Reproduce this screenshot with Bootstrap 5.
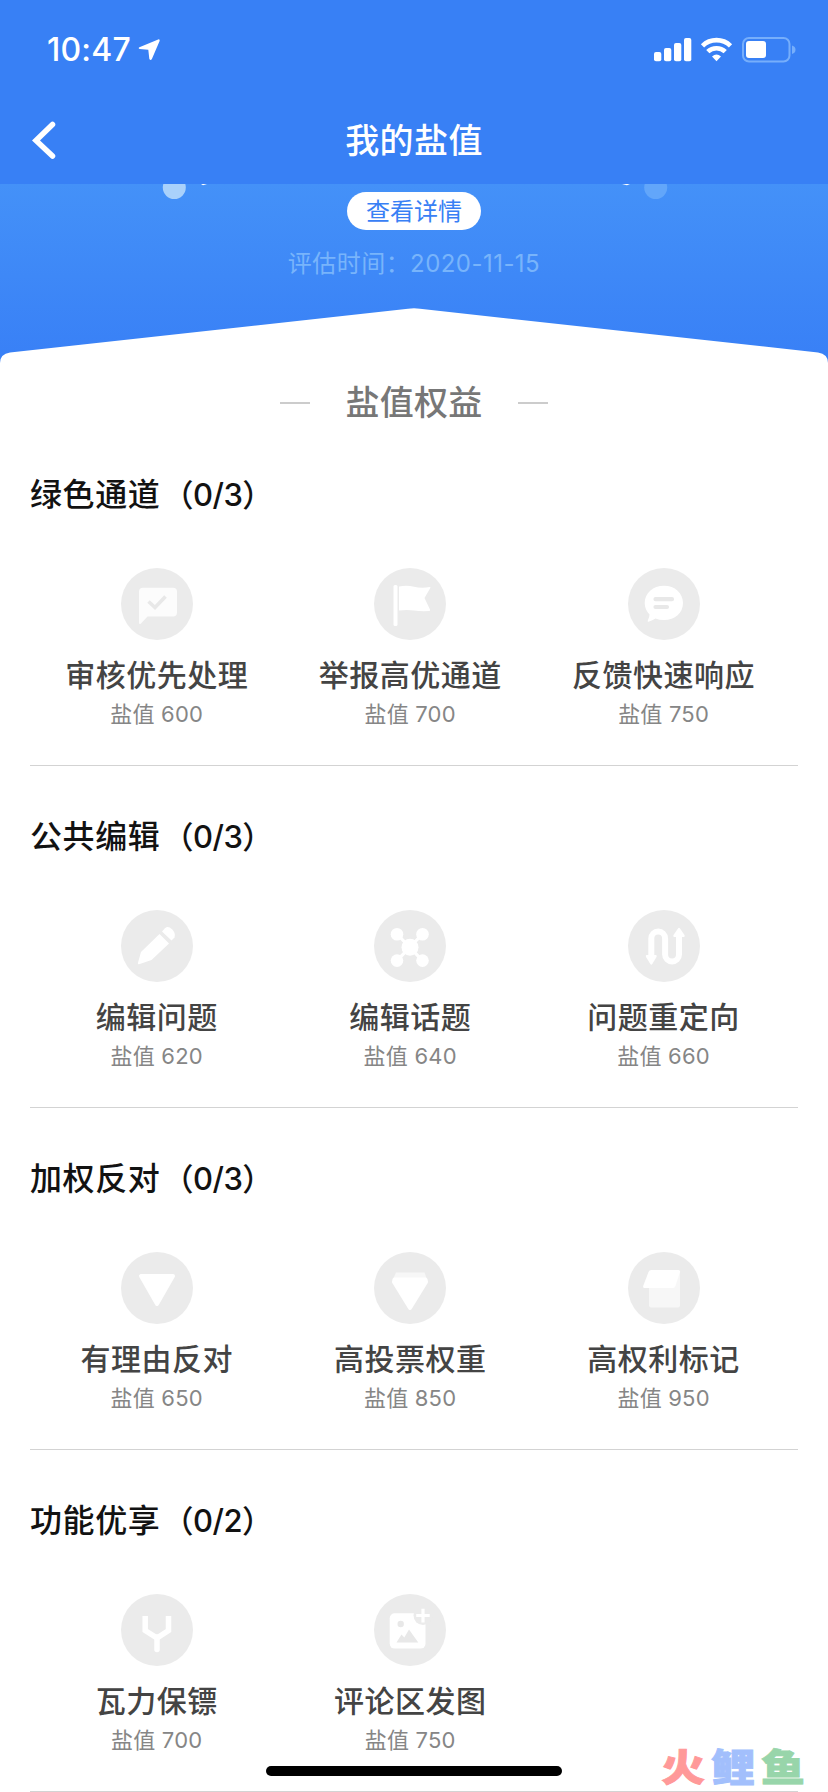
<!DOCTYPE html>
<html lang="zh-CN">
<head>
<meta charset="utf-8">
<meta name="viewport" content="width=device-width, initial-scale=1">
<title>我的盐值</title>
<link href="https://cdn.jsdelivr.net/npm/bootstrap@5.3.0/dist/css/bootstrap.min.css" rel="stylesheet">
<style>
  body { font-family: Inter, "Noto Sans CJK SC", sans-serif; background: #fff; }
  .screen { width: 828px; height: 1792px; }
  .topbar { height: 184px; background: #3880f5; }
  .statusbar { height: 100px; padding: 0 31px 0 47px; }
  .clock { font-size: 32px; font-weight: 500; line-height: 30px; letter-spacing: .2px; }
  .status-left { gap: 7px; }
  .titlebar { height: 84px; padding: 0 30px 2px; }
  .page-title { font-size: 34px; font-weight: 500; line-height: 40px; letter-spacing: .4px; }
  .hero { height: 184px; background: linear-gradient(#4491f8, #387ff6); }
  .hero-art { left: 0; top: 0; }
  .detail-btn { height: 38px; width: 134px; margin-top: 8px; font-size: 24px; line-height: 39px; color: #3880f5; }
  .date-line { font-size: 24px; line-height: 36px; margin-top: 16px; color: #78b4fb; letter-spacing: .45px; }
  .roof { left: 0; bottom: 0; }
  .rights-head { height: 56px; padding-top: 13px; gap: 35px; font-size: 34px; line-height: 42px; color: #777; font-weight: 500; letter-spacing: .3px; }
  .rights-head i { width: 30px; height: 2px; background: #ccc; }
  .group-block { height: 342px; margin: 0 30px; padding-top: 47px; border-bottom: 1px solid #d3d3d3; }
  .group-title { font-size: 32px; line-height: 48px; font-weight: 500; letter-spacing: .6px; color: #121212; }
  .group-title span { font-size: 31px; letter-spacing: -.5px; margin-left: 2px; }
  .entry { width: 33%; margin-top: 49px; }
  .entry svg { width: 72px; height: 72px; }
  .entry-name { font-size: 30px; line-height: 44px; margin-top: 13px; font-weight: 500; letter-spacing: .5px; color: #444; white-space: nowrap; }
  .entry-need { font-size: 22px; line-height: 34px; letter-spacing: .2px; color: #868686; }
  .home-bar { left: 266px; bottom: 16px; width: 296px; height: 10px; background: #000; }
  .brand { right: 23px; bottom: 5px; gap: 6px; font: 900 44px/44px "Noto Sans CJK SC", sans-serif; transform: scaleY(.86); }
  .brand span { -webkit-text-stroke: 1px currentColor; }
</style>
</head>
<body>
<div class="screen position-relative overflow-hidden">
  <header class="topbar text-white">
    <div class="statusbar d-flex align-items-center justify-content-between">
      <div class="status-left d-flex align-items-center">
        <span class="clock">10:47</span>
        <svg width="22" height="22" viewBox="0 0 22 22"><path d="M20.200.4 1.400 8.200Q-.2 9.200 1.600 9.900L10.300 10.800 11.300 19.800Q12.500 22.200 14 19.800L21.600 2Q22 .1 20.200.4Z" fill="#fff"/></svg>
      </div>
      <svg width="144" height="28" viewBox="0 0 144 28">
        <g fill="#fff"><rect x="1" y="16" width="7.300" height="9.300" rx="2"/><rect x="11" y="12" width="7.300" height="13.300" rx="2"/><rect x="21" y="7" width="7.300" height="18.300" rx="2"/><rect x="31" y="2" width="7.300" height="23.300" rx="2"/></g>
        <g fill="none" stroke="#fff" stroke-width="4.600"><path d="M49.500 9.800A20 20 0 0 1 77.500 9.800"/><path d="M54.800 15.700A12.500 12.500 0 0 1 72.200 15.700"/></g>
        <path d="M59 20.500Q63.500 16.700 68 20.500L63.500 25.300Z" fill="#fff"/>
        <rect x="90" y="2" width="46.500" height="23.500" rx="6" fill="none" stroke="#76aefb" stroke-width="2"/>
        <rect x="93" y="5" width="20" height="17" rx="3" fill="#fff"/><path d="M139 9.500Q142.500 10.500 142.500 13.700T139 18Z" fill="#76aefb"/>
      </svg>
    </div>
    <div class="titlebar d-flex align-items-center">
      <svg width="30" height="40" viewBox="0 0 30 40"><path d="M22.500 3.500 6 19.500 22.500 35" fill="none" stroke="#fff" stroke-width="5.500" stroke-linecap="round"/></svg>
      <div class="page-title flex-fill text-center">我的盐值</div>
      <div style="width:30px"></div>
    </div>
  </header>

  <div class="hero position-relative d-flex flex-column align-items-center">
    <svg class="hero-art position-absolute" width="828" height="20" viewBox="0 0 828 20"><circle cx="174.300" cy="3.500" r="11.500" fill="#a9d1fb"/><circle cx="655.700" cy="3.500" r="11.500" fill="#62a6fa"/><path d="M201 0h6l-4 1.200zM622 0h8l-3 1.200z" fill="#fff"/></svg>
    <div class="detail-btn bg-white rounded-pill text-center position-relative">查看详情</div>
    <div class="date-line">评估时间：2020-11-15</div>
    <svg class="roof position-absolute" width="828" height="60" viewBox="0 0 828 60"><path d="M0 60V55Q0 46 10 44.500L408 .8Q414-.3 420 .8L818 44.500Q828 46 828 55V60Z" fill="#fff"/></svg>
  </div>

  <main>
    <div class="rights-head d-flex align-items-center justify-content-center"><i></i><span>盐值权益</span><i></i></div>

    <section class="group-block">
      <div class="group-title">绿色通道<span>（0/3）</span></div>
      <div class="d-flex text-center">
        <div class="entry">
          <svg viewBox="0 0 72 72"><circle cx="36" cy="36" r="36" fill="#ebebeb"/><path d="M22 19.700H52Q56 19.700 56 23.700V44.500Q56 48.500 52 48.500H26.500L20 55.500Q18 57 18 54.500V23.700Q18 19.700 22 19.700Z" fill="#fcfcfc"/><path d="M27.500 33.500 34 39.500 44.500 28.500" fill="none" stroke="#e8e8e8" stroke-width="3.600"/></svg>
          <div class="entry-name">审核优先处理</div><div class="entry-need">盐值 600</div>
        </div>
        <div class="entry">
          <svg viewBox="0 0 72 72"><circle cx="36" cy="36" r="36" fill="#ebebeb"/><rect x="19.500" y="17" width="4" height="41" rx="1.500" fill="#fff"/><path d="M25 18.500Q33 17 40 18.700T56 19Q57 19 56 20.500L50.500 30 56 41.500Q56.500 43 55 43 47 43.500 40 42.500T25 42.500Z" fill="#fff"/></svg>
          <div class="entry-name">举报高优通道</div><div class="entry-need">盐值 700</div>
        </div>
        <div class="entry">
          <svg viewBox="0 0 72 72"><circle cx="36" cy="36" r="36" fill="#ebebeb"/><path d="M36 17.700C47 17.700 55 25 55 35S47 52 36 52Q31 52 27.500 50.500 24.500 52.500 20.500 53.700 19 54 20 52 21.500 49 21.500 46.500C18.500 43.500 16.700 39.500 16.700 35 16.700 25 25 17.700 36 17.700Z" fill="#fff"/><path d="M27.500 31.200H44M27.500 39H39" stroke="#e8e8e8" stroke-width="4.200" stroke-linecap="round"/></svg>
          <div class="entry-name">反馈快速响应</div><div class="entry-need">盐值 750</div>
        </div>
      </div>
    </section>

    <section class="group-block">
      <div class="group-title">公共编辑<span>（0/3）</span></div>
      <div class="d-flex text-center">
        <div class="entry">
          <svg viewBox="0 0 72 72"><circle cx="36" cy="36" r="36" fill="#ebebeb"/><path d="M38.500 24 48 33.500 30.500 50 18 54.300Q16.500 54.500 16.900 53L20 42Z" fill="#fff"/><path d="M41 21.500 44 18.200Q47 15.500 51 19.300T53.500 27.500L50.500 30.500Z" fill="#fff"/></svg>
          <div class="entry-name">编辑问题</div><div class="entry-need">盐值 620</div>
        </div>
        <div class="entry">
          <svg viewBox="0 0 72 72"><circle cx="36" cy="36" r="36" fill="#ebebeb"/><path d="M23 24 48.500 50.700M48.500 24 23 50.700" stroke="#fff" stroke-width="3.200"/><g fill="#fff"><circle cx="36" cy="37.300" r="8.500"/><circle cx="23" cy="24.300" r="6.300"/><circle cx="48.500" cy="24.300" r="6.300"/><circle cx="23" cy="50.600" r="6.300"/><circle cx="48.500" cy="50.600" r="6.300"/></g></svg>
          <div class="entry-name">编辑话题</div><div class="entry-need">盐值 640</div>
        </div>
        <div class="entry">
          <svg viewBox="0 0 72 72"><circle cx="36" cy="36" r="36" fill="#ebebeb"/><path d="M23.300 47V28.500A6.900 6.900 0 0 1 37.100 28.500V44.500A6.900 6.900 0 0 0 51 44.500V25" fill="none" stroke="#fff" stroke-width="6"/><path d="M18.500 45H28Q29.300 45.500 28.500 47L24.300 54Q23.300 55.500 22.300 54L18 47Q17.300 45.500 18.500 45ZM46 27H56Q57.300 26.500 56.500 25L52 18.500Q51 17 50 18.500L45.500 25Q44.800 26.500 46 27Z" fill="#fff"/></svg>
          <div class="entry-name">问题重定向</div><div class="entry-need">盐值 660</div>
        </div>
      </div>
    </section>

    <section class="group-block">
      <div class="group-title">加权反对<span>（0/3）</span></div>
      <div class="d-flex text-center">
        <div class="entry">
          <svg viewBox="0 0 72 72"><circle cx="36" cy="36" r="36" fill="#ebebeb"/><path d="M20 24H52L36 52Z" fill="#fff" stroke="#fff" stroke-width="4" stroke-linejoin="round"/></svg>
          <div class="entry-name">有理由反对</div><div class="entry-need">盐值 650</div>
        </div>
        <div class="entry">
          <svg viewBox="0 0 72 72"><circle cx="36" cy="36" r="36" fill="#ebebeb"/><path d="M22 20.500H50.500L52.500 26H19.500Z" fill="#f7f7f7"/><path d="M20.500 27.500H51.500L52 30 36 56 20 30Z" fill="#fff" stroke="#fff" stroke-width="4" stroke-linejoin="round"/></svg>
          <div class="entry-name">高投票权重</div><div class="entry-need">盐值 850</div>
        </div>
        <div class="entry">
          <svg viewBox="0 0 72 72"><circle cx="36" cy="36" r="36" fill="#ebebeb"/><path d="M21 34H47L52 20V53.500Q52 55.500 50 55.500H23Q21 55.500 21 53.500Z" fill="#f7f7f7"/><path d="M23.500 18H50.500Q52.500 18 52 20.500L47.500 34Q46.800 36 45 36H16.500Q14.500 36 15.200 34L20.500 20Q21.300 18 23.500 18Z" fill="#fff"/></svg>
          <div class="entry-name">高权利标记</div><div class="entry-need">盐值 950</div>
        </div>
      </div>
    </section>

    <section class="group-block">
      <div class="group-title">功能优享<span>（0/2）</span></div>
      <div class="d-flex text-center">
        <div class="entry">
          <svg viewBox="0 0 72 72"><circle cx="36" cy="36" r="36" fill="#ebebeb"/><path d="M24.200 22V36.500L36 44 47.500 36.500V22" fill="none" stroke="#fff" stroke-width="5.500"/><path d="M36 43V55.500" stroke="#fff" stroke-width="5.500" stroke-linecap="round"/></svg>
          <div class="entry-name">瓦力保镖</div><div class="entry-need">盐值 700</div>
        </div>
        <div class="entry">
          <svg viewBox="0 0 72 72"><circle cx="36" cy="36" r="36" fill="#ebebeb"/><rect x="15.700" y="19.300" width="35.800" height="35.300" rx="5" fill="#fff"/><circle cx="49" cy="21.500" r="9.500" fill="#ebebeb"/><path d="M49 14.700V28.500M42.200 21.500H55.700" stroke="#fff" stroke-width="3.200"/><circle cx="26.700" cy="30" r="3.200" fill="#e8e8e8"/><path d="M22.500 48.500 27.500 40.500 30.300 43.500 35 35.500 44.300 48.500Z" fill="#e8e8e8"/></svg>
          <div class="entry-name">评论区发图</div><div class="entry-need">盐值 750</div>
        </div>
      </div>
    </section>
  </main>

  <div class="home-bar position-absolute rounded-pill"></div>
  <div class="brand position-absolute d-flex"><span style="color:#ff9999">火</span><span style="color:#a2bffc">鲤</span><span style="color:#98d5aa">鱼</span></div>
</div>
<script src="https://cdn.jsdelivr.net/npm/bootstrap@5.3.0/dist/js/bootstrap.bundle.min.js"></script>
</body>
</html>
